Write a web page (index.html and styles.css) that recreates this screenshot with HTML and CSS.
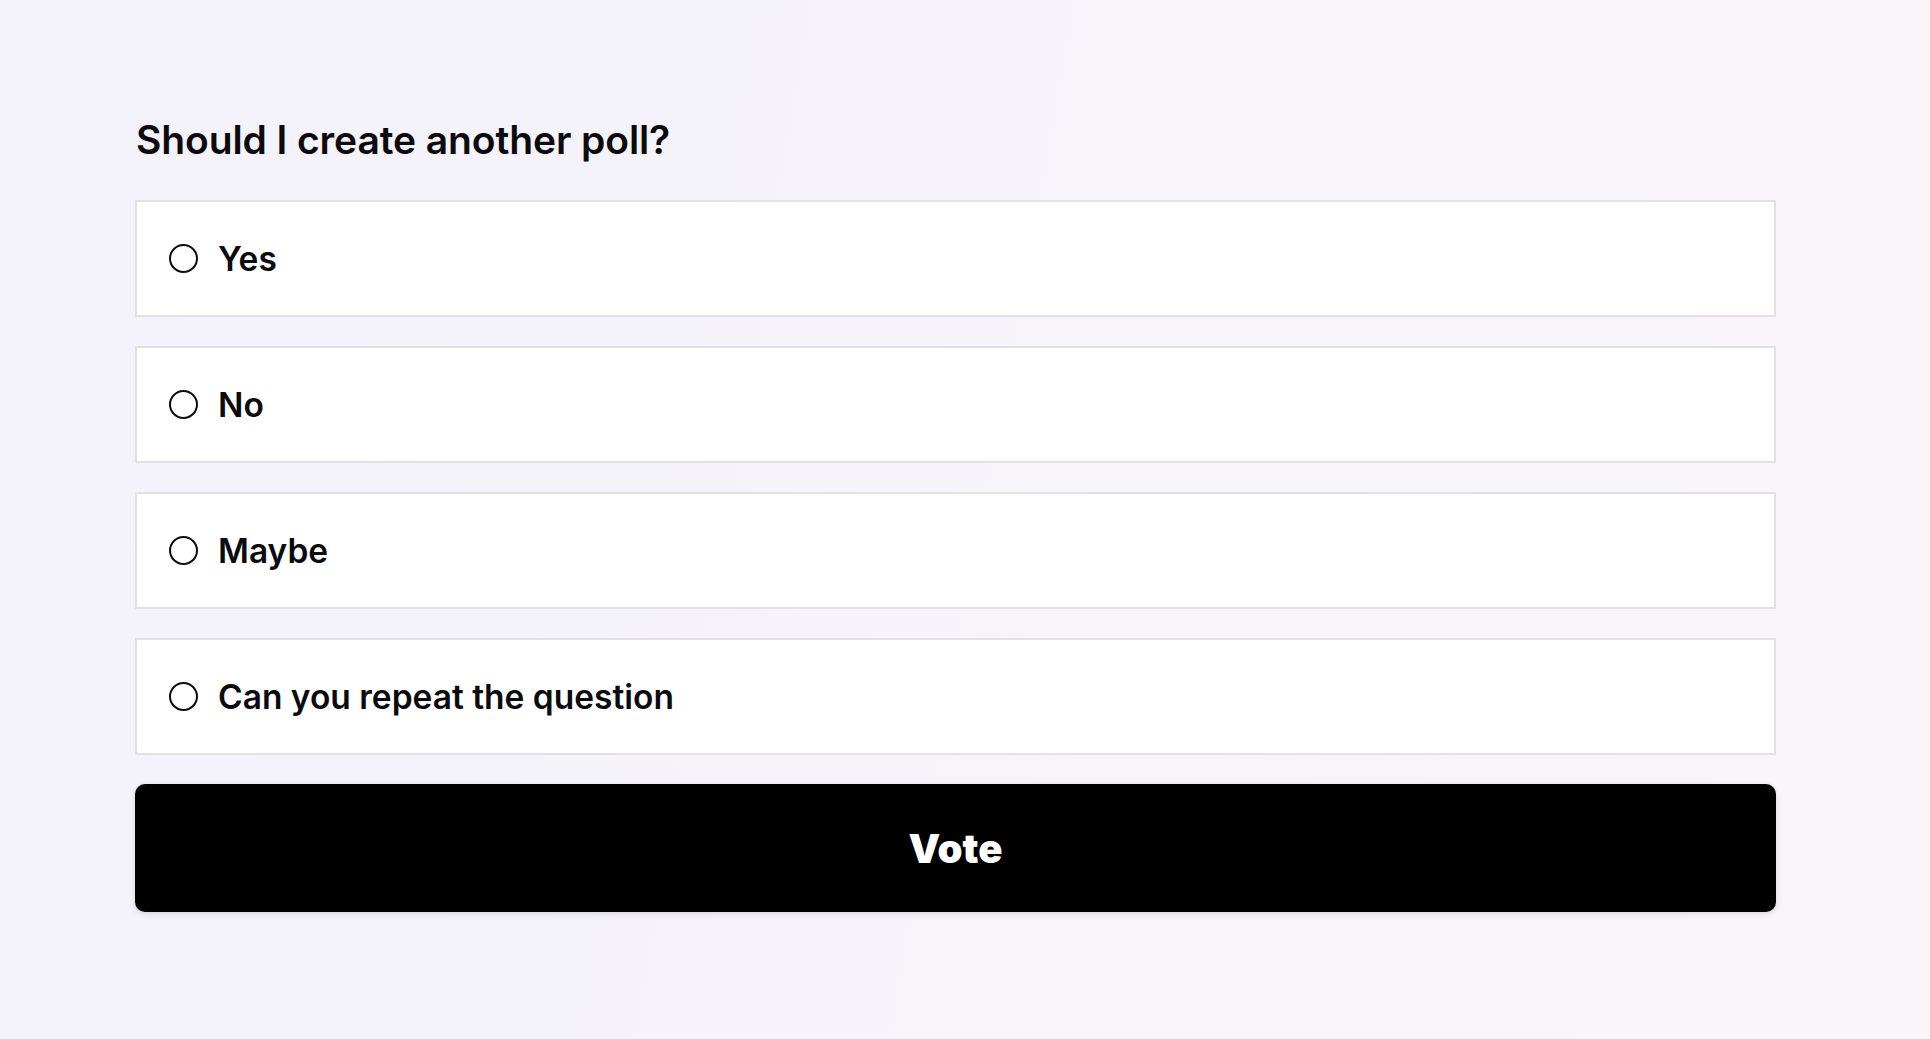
FILE: index.html
```html
<!DOCTYPE html>
<html lang="en">
<head>
<meta charset="utf-8">
<title>Poll</title>
<link rel="stylesheet" href="styles.css">
</head>
<body>
<main class="page">
  <form class="poll">
    <h1 class="poll-title">Should I create another poll?</h1>
    <div class="options">
      <label class="option"><span class="radio"></span><span class="option-text">Yes</span></label>
      <label class="option"><span class="radio"></span><span class="option-text">No</span></label>
      <label class="option"><span class="radio"></span><span class="option-text">Maybe</span></label>
      <label class="option"><span class="radio"></span><span class="option-text">Can you repeat the question</span></label>
    </div>
    <button type="button" class="vote">Vote</button>
  </form>
</main>
</body>
</html>
```

FILE: styles.css
```css
* { box-sizing: border-box; }
html, body { margin: 0; height: 100%; }
body {
  font-family: Inter, "Noto Sans", sans-serif;
  color: #0b0b0d;
  background: linear-gradient(100deg, #f3f1fa 0%, #f6f4fa 45%, #f9f5f9 100%);
}
.page {
  padding: 118px 154px 0 135px;
}
.poll-title {
  margin: 0 0 38px 1px;
  font-size: 39px;
  font-weight: 600;
  letter-spacing: -0.1px;
  line-height: 44px;
}
.options {
  display: flex;
  flex-direction: column;
  gap: 29px;
}
.option {
  display: flex;
  align-items: center;
  height: 117px;
  padding-left: 32px;
  background: #fff;
  border: 2px solid #e2e0e5;
}
.radio {
  width: 29px;
  height: 29px;
  border: 2.5px solid #0b0b0d;
  border-radius: 50%;
  margin-right: 20px;
  flex: none;
}
.option-text {
  font-size: 33.5px;
  font-weight: 600;
  letter-spacing: 0;
}
.vote {
  display: block;
  width: 100%;
  height: 128px;
  margin-top: 29px;
  border: none;
  border-radius: 10px;
  background: #000;
  color: #fff;
  font-family: Inter, sans-serif;
  font-size: 40px;
  font-weight: 900;
  box-shadow: 0 2px 6px rgba(0,0,0,0.12);
}
```
